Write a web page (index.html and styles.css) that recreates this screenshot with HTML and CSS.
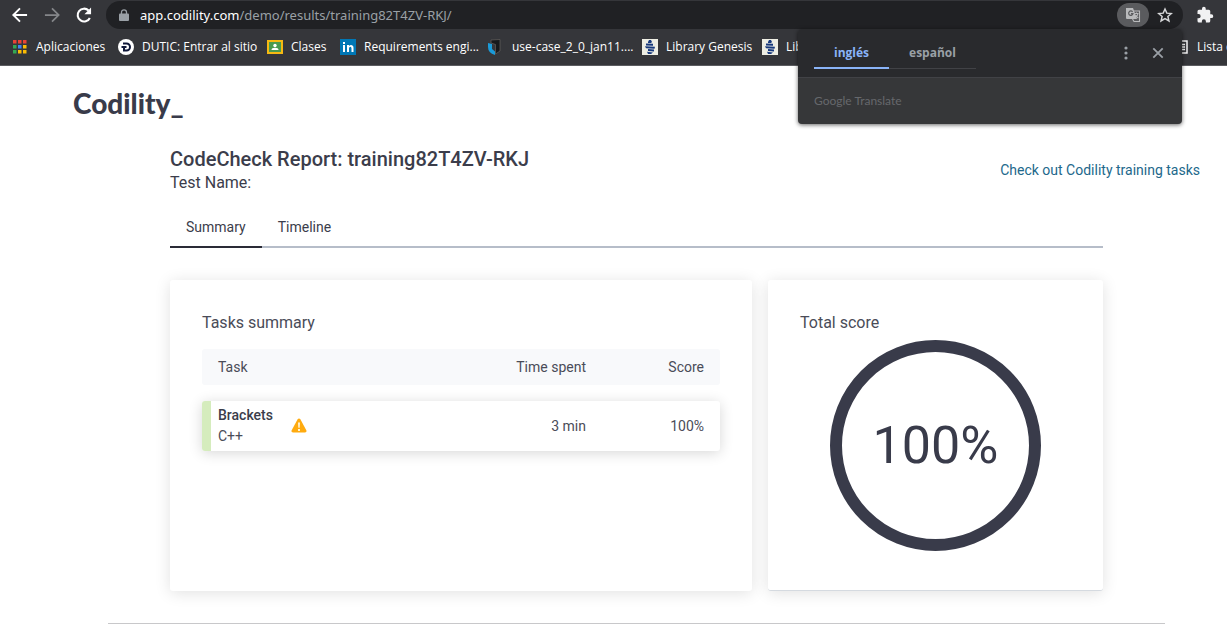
FILE: index.html
```html
<!DOCTYPE html>
<html lang="en">
<head>
<meta charset="utf-8">
<title>CodeCheck Report</title>
<link rel="stylesheet" href="styles.css">
</head>
<body>
<header class="browser">
  <div class="toolbar">
    <nav class="history">
      <button class="icon-button" aria-label="Back"><svg width="20" height="20" viewBox="0 0 24 24"><path fill="none" stroke="#fff" stroke-width="2.3" d="M20.500 12H4.500M12 4l-8 8 8 8"/></svg></button>
      <button class="icon-button" aria-label="Forward"><svg width="20" height="20" viewBox="0 0 24 24"><path fill="none" stroke="#85878a" stroke-width="2.1" d="M3.500 12H19.500M12 4l8 8-8 8"/></svg></button>
      <button class="icon-button" aria-label="Reload"><svg width="20" height="20" viewBox="0 0 24 24"><path fill="none" stroke="#fff" stroke-width="2.500" d="M19 15.500A7.700 7.700 0 1 1 17.500 6.600"/><path fill="#fff" d="M20.500 3v8h-8z"/></svg></button>
    </nav>
    <div class="address">
      <svg class="lock" width="10" height="13" viewBox="0 0 10 13"><path fill="#9aa0a6" d="M1 4.500h8q1 0 1 1V11q0 1-1 1H1q-1 0-1-1V5.500q0-1 1-1z"/><path fill="none" stroke="#9aa0a6" stroke-width="1.300" d="M2.500 5V3.300a2.500 2.500 0 0 1 5 0V5"/></svg>
      <span class="url"><span class="host">app.codility.com</span>/demo/results/training82T4ZV-RKJ/</span>
      <button class="translate-button" aria-label="Translate this page"><svg width="16" height="16" viewBox="0 0 16 16"><path fill="#b9babc" d="M1 1h7l4 11H2q-1 0-1-1z"/><path fill="none" stroke="#5a5b5e" stroke-width="1.200" d="M7.600 4.800A2.200 2.200 0 1 0 8 6.700H6"/><path fill="none" stroke="#b9babc" stroke-width="1.100" d="M9 4h5.500v10.500H9L7.500 12M9.500 6.500h4M11.500 5.500v1M13 6.500q-.5 3-3 4M10.500 8q1 2 2.800 3"/></svg></button>
      <button class="icon-button" aria-label="Bookmark this page"><svg width="16" height="16" viewBox="0 0 24 24"><path fill="none" stroke="#d6d7d9" stroke-width="2.200" d="M12 3l2.700 6.200 6.800.6-5.200 4.500 1.600 6.600L12 17.400l-5.900 3.500 1.600-6.600L2.500 9.800l6.800-.6z"/></svg></button>
    </div>
    <button class="icon-button extensions" aria-label="Extensions"><svg width="18" height="18" viewBox="0 0 24 24"><path fill="#f1f1f2" d="M20.500 11H19V7a2 2 0 0 0-2-2h-4V3.500a2.500 2.500 0 0 0-5 0V5H4a2 2 0 0 0-2 2v3.800h1.500a2.700 2.700 0 0 1 0 5.400H2V20a2 2 0 0 0 2 2h3.800v-1.500a2.700 2.700 0 0 1 5.400 0V22H17a2 2 0 0 0 2-2v-4h1.500a2.500 2.500 0 0 0 0-5z"/></svg></button>
  </div>
  <nav class="bookmarks">
    <a class="bookmark" href="#"><svg width="16" height="16" viewBox="0 0 16 16"><path fill="#ea4335" d="M1 1h3.500v3.500H1zM6 1h3.500v3.500H6zM11 1h3.500v3.500H11z"/><path fill="#34a853" d="M1 6h3.500v3.500H1zM1 11h3.500v3.500H1z"/><path fill="#4285f4" d="M6 6h3.500v3.500H6z"/><path fill="#fbbc04" d="M11 6h3.500v3.500H11zM6 11h3.500v3.500H6zM11 11h3.500v3.500H11z"/></svg>Aplicaciones</a>
    <a class="bookmark" href="#"><svg width="16" height="16" viewBox="0 0 16 16"><circle cx="8" cy="8" r="8" fill="#fff"/><path fill="none" stroke="#10183a" stroke-width="2" d="M5 4.500h3.500a3.500 3.500 0 0 1 0 7H6V8.500M3.500 8h5"/></svg>DUTIC: Entrar al sitio</a>
    <a class="bookmark" href="#"><svg width="16" height="16" viewBox="0 0 16 16"><path fill="#f6b912" d="M0 1h16v14H0z"/><path fill="#4a9a4e" d="M2 3h12v10H2z"/><circle cx="8" cy="6.500" r="1.700" fill="#fff"/><path fill="#fff" d="M4.500 11q0-2.200 3.500-2.200t3.500 2.200z"/></svg>Clases</a>
    <a class="bookmark" href="#"><svg width="16" height="16" viewBox="0 0 16 16"><path fill="#0077b5" d="M0 0h16v16H0z"/><path fill="#fff" d="M3 6h2v7H3zM3 3h2v2H3zM7 6h2v1q2-2 4 0 .5.700.5 2v4h-2V9.500q0-1.700-1.200-1.700T9 9.500V13H7z"/></svg>Requirements engi...</a>
    <a class="bookmark" href="#"><svg width="16" height="16" viewBox="0 0 16 16"><path fill="#1b9bd8" d="M0 4l4 1v5l3 2.500V16Q0 14 0 8z"/><path fill="#17191b" stroke="#66625f" stroke-width=".7" d="M3 1l9-.5V12l-4.500 3V5.500L3 4z"/></svg>use-case_2_0_jan11....</a>
    <a class="bookmark" href="#"><svg width="16" height="16" viewBox="0 0 16 16"><path fill="#eeeee4" d="M0 0h16v16H0z"/><path fill="#17397d" d="M7 1h2l1 2-1 1H6V3zM4 4.500l7 .3v2l-7-.3zM3 7.300l10 .5-.5 2L4 9.300zM6 10l6 .5v2l-6-.5zM5 12.700l6 .8-2 1.500H6z"/></svg>Library Genesis</a>
    <a class="bookmark" href="#"><svg width="16" height="16" viewBox="0 0 16 16"><path fill="#eeeee4" d="M0 0h16v16H0z"/><path fill="#17397d" d="M7 1h2l1 2-1 1H6V3zM4 4.500l7 .3v2l-7-.3zM3 7.300l10 .5-.5 2L4 9.300zM6 10l6 .5v2l-6-.5zM5 12.700l6 .8-2 1.500H6z"/></svg>Lib</a>
    <a class="bookmark reading-list" href="#"><svg width="16" height="16" viewBox="0 0 16 16"><path fill="none" stroke="#f1f1f2" stroke-width="1.500" d="M2 2h12v12H2zM4 5.500h8M4 8h8M4 10.500h8"/></svg>Lista de</a>
  </nav>
  <section class="translate-popup" aria-label="Translate">
    <div class="popup-head">
      <div class="languages">
        <button class="language language-active">inglés</button>
        <button class="language">español</button>
      </div>
      <div class="popup-actions">
        <button class="icon-button" aria-label="Options"><svg width="16" height="16" viewBox="0 0 16 16"><g fill="#9aa0a6"><circle cx="8" cy="3" r="1.600"/><circle cx="8" cy="8" r="1.600"/><circle cx="8" cy="13" r="1.600"/></g></svg></button>
        <button class="icon-button" aria-label="Close"><svg width="16" height="16" viewBox="0 0 16 16"><path stroke="#9aa0a6" stroke-width="1.800" d="M3.300 3.300l9.400 9.400M12.700 3.300l-9.400 9.400"/></svg></button>
      </div>
    </div>
    <p class="popup-foot">Google Translate</p>
  </section>
</header>
<main class="page">
  <div class="site">
    <a class="logo" href="#">Codility_</a>
    <div class="report-head">
      <div>
        <h1 class="title">CodeCheck Report: training82T4ZV-RKJ</h1>
        <p class="test-name">Test Name:</p>
      </div>
      <a class="training-link" href="#">Check out Codility training tasks</a>
    </div>
  </div>
  <div class="report">
    <nav class="tabs">
      <button class="tab tab-active">Summary</button>
      <button class="tab">Timeline</button>
    </nav>
    <div class="cards">
      <section class="card">
        <h2 class="card-title">Tasks summary</h2>
        <table class="tasks">
          <thead><tr class="row row-head"><th>Task</th><th>Time spent</th><th>Score</th></tr></thead>
          <tbody><tr class="row row-task">
            <td class="task"><span><span class="task-name">Brackets</span><br>C++</span>
              <svg width="16" height="16" viewBox="0 0 16 16"><path fill="#ffab0f" d="M6.500 1.500q1.500-2 3 0l5.800 10.800q.8 2-1.300 2.200H2Q-.2 14.300.7 12.300z"/><path fill="#fff3d6" d="M7 4.500h2l-.3 5.200H7.300zM7 11h2v2H7z"/></svg>
            </td>
            <td>3 min</td><td>100%</td>
          </tr></tbody>
        </table>
      </section>
      <section class="card card-score">
        <h2 class="card-title">Total score</h2>
        <div class="ring">100%</div>
      </section>
    </div>
  </div>
  <hr class="divider">
</main>
</body>
</html>
```
FILE: styles.css
```css
* { box-sizing: border-box; }
body {
  margin: 0;
  background: #fff;
  color: #3b3d4b;
  font-family: Roboto, sans-serif;
  font-size: 14px;
  line-height: 20px;
  overflow: hidden;
}
h1, h2, p { margin: 0; font-weight: 400; }
button { border: 0; padding: 0; background: none; font: inherit; color: inherit; }
a { text-decoration: none; color: inherit; }
svg { display: block; flex: none; }

.browser {
  position: relative;
  background: #35363a;
  border-bottom: 1px solid #5b5c60;
  color: #fff;
  font-family: "Open Sans", sans-serif;
  font-size: 12px;
  line-height: 16px;
}
.icon-button { display: flex; }
.toolbar { display: flex; align-items: center; height: 30px; padding: 0 0 0 10px; }
.history { display: flex; gap: 12px; width: 96px; }
.address {
  flex: 1;
  display: flex;
  align-items: center;
  height: 28px;
  padding: 0 10px 0 13px;
  border-radius: 14px;
  background: #202124;
}
.url { flex: 1; margin-left: 11px; color: #9aa0a6; font-family: "Noto Sans", sans-serif; font-size: 13px; }
.host { color: #fff; }
.translate-button {
  display: flex;
  align-items: center;
  justify-content: center;
  width: 32px;
  height: 24px;
  margin-right: 8px;
  border-radius: 12px;
  background: #5a5b5e;
}
.extensions { width: 44px; padding-left: 13px; }
.bookmarks {
  display: grid;
  grid-template-columns: 106px 149px 73px 148px 154px 120px 1fr 54px;
  align-items: center;
  height: 35px;
  padding: 0 0 2px 12px;
  overflow: hidden;
}
.bookmark { display: flex; gap: 8px; align-items: center; white-space: nowrap; }

.translate-popup {
  position: absolute;
  top: 29px;
  right: 45px;
  width: 384px;
  border-radius: 4px;
  background: #363739;
  box-shadow: 0 1px 4px rgba(0, 0, 0, .6);
  overflow: hidden;
}
.popup-head {
  display: flex;
  justify-content: space-between;
  height: 49px;
  padding: 0 16px;
  background: #292a2d;
  border-bottom: 1px solid #414246;
}
.languages { display: flex; align-self: flex-start; height: 40px; }
.language { padding: 8px 20px 0; border-bottom: 1px solid #414246; color: #9aa0a6; font-weight: 700; }
.language-active { padding-top: 9px; border-bottom: 2px solid #8ab4f8; color: #8ab4f8; }
.popup-actions { display: flex; gap: 16px; align-items: center; }
.popup-foot { padding: 15px 16px; color: #66686c; font-family: Lato, sans-serif; }

.page { padding-left: 46px; }
.site { max-width: 1127px; margin: 0 auto; padding-top: 21px; }
.logo {
  display: block;
  width: max-content;
  color: #393b4a;
  font-family: Lato, sans-serif;
  font-size: 28px;
  font-weight: 900;
  line-height: 32px;
}
.report-head {
  display: flex;
  justify-content: space-between;
  align-items: center;
  margin: 27px 0 0 97px;
}
.title { font-size: 20px; line-height: 26px; font-weight: 500; }
.test-name { font-size: 16px; line-height: 22px; }
.training-link { color: #22688b; }
.report { max-width: 933px; margin: 12px auto 0; }
.tabs { display: flex; border-bottom: 2px solid #b6bdc9; }
.tab { height: 42px; margin-bottom: -2px; padding: 2px 16px 0; border-bottom: 2px solid transparent; }
.tab-active { border-color: #2a2b36; }
.cards { display: grid; grid-template-columns: 582fr 335fr; gap: 16px; margin-top: 32px; }
.card {
  padding: 32px;
  border-radius: 3px;
  background: #fff;
  box-shadow: 0 2px 16px rgba(0, 0, 0, .12);
  color: #4a4c58;
}
.card-score { padding-bottom: 39px; border-bottom: 1px solid #d5dae0; }
.card-title { font-size: 16px; line-height: 22px; }
.tasks, .tasks thead, .tasks tbody { display: block; }
.tasks { margin-top: 15px; }
.row {
  display: grid;
  grid-template-columns: 1fr 120px 118px;
  align-items: center;
  padding: 0 16px;
  border-radius: 3px;
}
.row th, .row td { padding: 0; font-weight: 400; text-align: right; }
.row th:first-child, .row .task { text-align: left; }
.row-head { height: 36px; background: #f8f9fb; }
.row-task {
  height: 50px;
  margin-top: 16px;
  padding-left: 7px;
  border-left: 9px solid #d5ecbd;
  box-shadow: 0 2px 14px rgba(0, 0, 0, .16);
}
.row .task { display: flex; gap: 18px; align-items: center; line-height: 21px; }
.task-name { color: #3b3d4b; font-weight: 500; }
.ring {
  display: flex;
  align-items: center;
  justify-content: center;
  width: 211px;
  height: 211px;
  margin: 6px auto 0;
  border: 12px solid #393b4a;
  border-radius: 50%;
  color: #393b4a;
  font-size: 52px;
  line-height: 60px;
}
.divider { max-width: 1057px; margin: 32px auto 0; border: 0; border-top: 1px solid #c8c8ca; }
```
